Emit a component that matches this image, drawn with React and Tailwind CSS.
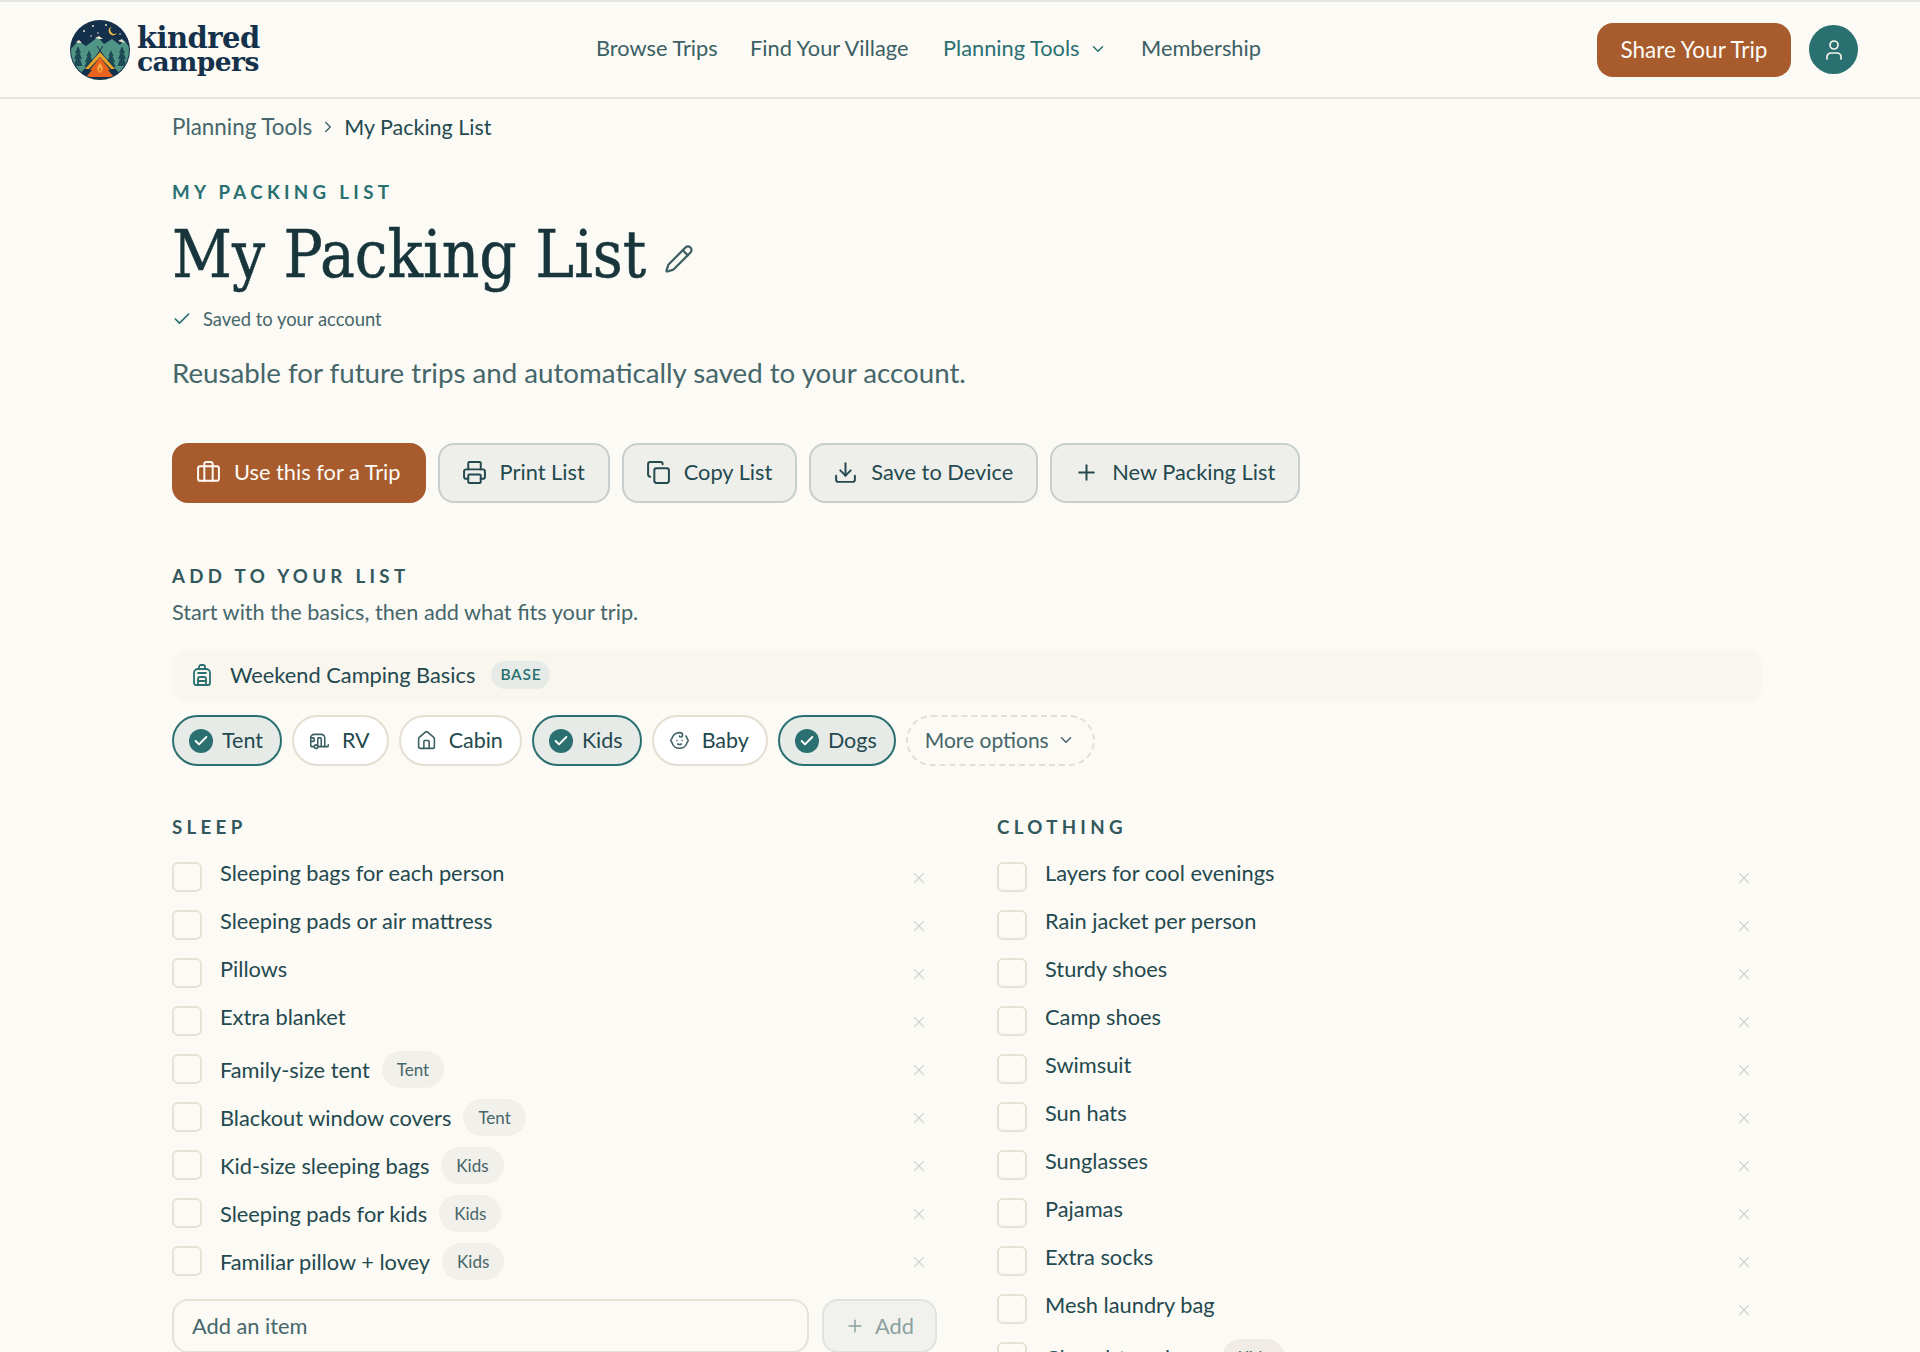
import { Backpack, Baby, Briefcase, Caravan, Check, ChevronDown, ChevronRight, Copy, Download, House, Pencil, Plus, Printer, User, X } from "lucide-react";

const sleep = [
  ["Sleeping bags for each person"],
  ["Sleeping pads or air mattress"],
  ["Pillows"],
  ["Extra blanket"],
  ["Family-size tent", "Tent"],
  ["Blackout window covers", "Tent"],
  ["Kid-size sleeping bags", "Kids"],
  ["Sleeping pads for kids", "Kids"],
  ["Familiar pillow + lovey", "Kids"],
];

const clothing = [
  ["Layers for cool evenings"],
  ["Rain jacket per person"],
  ["Sturdy shoes"],
  ["Camp shoes"],
  ["Swimsuit"],
  ["Sun hats"],
  ["Sunglasses"],
  ["Pajamas"],
  ["Extra socks"],
  ["Mesh laundry bag"],
  ["Closed-toe shoes", "Kids", true],
];

const Logo = () => (
  <svg viewBox="0 0 60 60" className="w-[60px] h-[60px] shrink-0">
    <defs>
      <clipPath id="logoClip">
        <circle cx="30" cy="30" r="29" />
      </clipPath>
    </defs>
    <circle cx="30" cy="30" r="30" fill="#14304a" />
    <g clipPath="url(#logoClip)">
      <path d="M0 30 L8 21 L16 26 L28 17 L34 24 L42 19 L50 25 L54 20 L60 28 V52 H0Z" fill="#4f9485" />
      <path d="M6 22 L9 20 L12 23 L9 23Z M25 18 L29 16 L33 19 L29 19Z M48 21 L52 19 L55 23 L51 22Z" fill="#e9dfc8" />
      <path d="M8 26 L11 33 H9.5 L12 39 H10 L12.500 46 H3.500 L6 39 H4 L6.500 33 H5Z" fill="#1c4a55" />
      <path d="M19 30 L21.500 36 H20.500 L23 42 H21.500 L23.500 47 H14.500 L16.500 42 H15 L17.500 36 H16.500Z" fill="#1c4a55" />
      <path d="M41 30 L43.500 36 H42.500 L45 42 H43.500 L45.500 47 H36.500 L38.500 42 H37 L39.500 36 H38.500Z" fill="#1c4a55" />
      <path d="M52 26 L55 33 H53.500 L56 39 H54 L56.500 46 H47.500 L50 39 H48 L50.500 33 H49Z" fill="#1c4a55" />
      <path d="M10 54 L30 31 L50 54Z" fill="#14304a" />
      <path d="M27 26 L33 35 M33 26 L27 35" stroke="#14304a" strokeWidth="1" />
      <path d="M15 49 L30 32 L45 49 L41 49 L30 37 L19 49Z" fill="#e3a32c" />
      <path d="M16 57 L22 50 L20 50 L27 41 L30 37 L33 41 L40 50 L38 50 L44 57 Z" fill="#e8641e" />
      <path d="M30 43 C33 47 34 50 30 53 C26 50 27 47 30 43Z" fill="#f3b04a" />
      <path d="M30 47 C31.500 49 31.500 50.500 30 52 C28.500 50.500 28.500 49 30 47Z" fill="#e8641e" />
    </g>
    <path d="M42 6.500 A4.500 4.500 0 1 0 47 13 A4 4 0 0 1 42 6.500Z" fill="#eebd45" />
    <g fill="#e9dfc8">
      <circle cx="23" cy="6" r="1" />
      <circle cx="36" cy="5" r="1" />
      <circle cx="14" cy="11" r="1" />
      <circle cx="28" cy="13" r="0.8" />
      <circle cx="50" cy="14" r="0.8" />
      <circle cx="21" cy="16" r="0.8" />
    </g>
  </svg>
);

const ActionButton = ({ icon: Icon, label, primary }) => (
  <button
    className={`h-[60px] flex items-center gap-[13px] pl-[22px] pr-[23px] pb-[2px] rounded-[16px] text-[21.800px] border-2 ${
      primary
        ? "bg-[#a85b2d] border-[#a85b2d] text-[#fbfaf5]"
        : "bg-[#eeefeb] border-[#c6cfcd] text-[#24494e]"
    }`}
  >
    <Icon className="w-[25px] h-[25px]" strokeWidth={1.9} />
    {label}
  </button>
);

const Chip = ({ icon: Icon, label, active }) => (
  <div
    className={`h-[51px] flex items-center gap-[9px] pl-[15px] pr-[17px] rounded-full border-2 text-[21.500px] text-[#24494e] ${
      active ? "bg-[#e6ebe8] border-[#2a7070]" : "bg-white border-[#e5ded2]"
    }`}
  >
    {active ? (
      <span className="w-[24px] h-[24px] rounded-full bg-[#2a7070] flex items-center justify-center">
        <Check className="w-[16px] h-[16px] text-white" strokeWidth={3} />
      </span>
    ) : (
      <Icon className="w-[21px] h-[21px] text-[#3c5f63] mr-[3px]" strokeWidth={1.8} />
    )}
    {label}
  </div>
);

const Row = ({ name, tag, tinted }) => (
  <div className="h-[48px] shrink-0 flex items-start">
    <div className="w-[30px] h-[30px] shrink-0 rounded-[6px] border-2 border-[#e8e2d6] bg-[#fbfaf5]"></div>
    <div className={`ml-[18px] flex-1 flex items-center gap-[12px] text-[21.800px] leading-[21px] text-[#24494e] ${tag ? "-mt-[3px]" : ""}`}>
      {name}
      {tag && (
        <span className={`h-[37px] px-[15px] flex items-center rounded-full text-[17px] text-[#46666a] ${tinted ? "bg-[#f1ebe6]" : "bg-[#f2f0ea]"}`}>
          {tag}
        </span>
      )}
    </div>
    <X className="w-[18px] h-[18px] mt-[7px] mr-[9px] text-[#cfd4d1]" strokeWidth={1.5} />
  </div>
);

const Heading = ({ children }) => (
  <h3 className="text-[18.700px] font-bold tracking-[0.23em] leading-[24px] text-[#33585c]">{children}</h3>
);

export default function App() {
  return (
    <div className="h-[1352px] overflow-hidden bg-[#fbfaf5] font-['Lato','Noto_Sans',sans-serif] text-[#24494e]">
      <header className="h-[99px] border-t-2 border-t-[#e6e6e3] border-b-2 border-b-[#e8e4dc] flex items-center pl-[70px] pr-[62px]">
        <div className="w-[526px] flex items-center gap-[7px]">
          <Logo />
          <div className="font-['DejaVu_Serif',serif] font-bold text-[#14304a] text-[26.500px] leading-[24px] tracking-[-0.02em]">
            <div className="text-[29px]">kindred</div>
            <div>campers</div>
          </div>
        </div>
        <nav className="flex-1 flex items-center text-[21.800px] text-[#3c5f63] -mt-[2px]">
          <a className="w-[154px]">Browse Trips</a>
          <a className="w-[193px]">Find Your Village</a>
          <a className="w-[198px] flex items-center gap-[9px] text-[#2a7070]">
            Planning Tools <ChevronDown className="w-[18px] h-[18px]" />
          </a>
          <a>Membership</a>
        </nav>
        <button className="h-[54px] w-[194px] rounded-[16px] bg-[#a85b2d] text-[#fbfaf5] text-[22.500px]">Share Your Trip</button>
        <div className="ml-[18px] w-[49px] h-[49px] rounded-full bg-[#2a7070] flex items-center justify-center">
          <User className="w-[24px] h-[24px] text-[#f5f3ea]" strokeWidth={1.7} />
        </div>
      </header>

      <main className="w-[1590px] ml-[172px]">
        <div className="mt-[13px] flex items-center gap-[7px] text-[22.400px] leading-[30px] text-[#46666a]">
          Planning Tools <ChevronRight className="w-[18px] h-[18px]" />
          <span className="text-[21.500px] text-[#24494e]">My Packing List</span>
        </div>

        <p className="mt-[38px] text-[18.700px] font-bold tracking-[0.23em] leading-[24px] text-[#2a7070]">MY PACKING LIST</p>

        <div className="mt-[11px] flex items-center gap-[18px]">
          <h1 className="font-['DejaVu_Serif_Condensed','Liberation_Serif',serif] text-[65px] leading-[80px] text-[#17353a] [-webkit-text-stroke:0.5px_#17353a]">My Packing List</h1>
          <Pencil className="w-[30px] h-[30px] mt-[8px] text-[#3c5f63]" strokeWidth={1.8} />
        </div>

        <div className="mt-[12px] flex items-center gap-[11px] text-[18.400px] leading-[24px] text-[#46666a]">
          <Check className="w-[20px] h-[20px] text-[#2a7070]" strokeWidth={2} />
          Saved to your account
        </div>

        <p className="mt-[24px] text-[27.700px] leading-[36px] text-[#46666a]">
          Reusable for future trips and automatically saved to your account.
        </p>

        <div className="mt-[52px] flex gap-[12px]">
          <ActionButton icon={Briefcase} label="Use this for a Trip" primary />
          <ActionButton icon={Printer} label="Print List" />
          <ActionButton icon={Copy} label="Copy List" />
          <ActionButton icon={Download} label="Save to Device" />
          <ActionButton icon={Plus} label="New Packing List" />
        </div>

        <div className="mt-[61px]">
          <Heading>ADD TO YOUR LIST</Heading>
        </div>
        <p className="mt-[11px] text-[21.700px] leading-[26px] text-[#46666a]">Start with the basics, then add what fits your trip.</p>

        <div className="mt-[24px] h-[54px] rounded-[16px] bg-[#f9f6f0] flex items-center pl-[18px] pb-[2px] text-[21.800px]">
          <Backpack className="w-[24px] h-[24px] text-[#2a7070]" strokeWidth={1.8} />
          <span className="ml-[16px]">Weekend Camping Basics</span>
          <span className="ml-[16px] h-[28px] px-[9px] rounded-full bg-[#e6ebe8] text-[#2a7070] text-[15.500px] font-semibold tracking-[0.05em] flex items-center">BASE</span>
        </div>

        <div className="mt-[12px] flex gap-[10px]">
          <Chip label="Tent" active />
          <Chip icon={Caravan} label="RV" />
          <Chip icon={House} label="Cabin" />
          <Chip label="Kids" active />
          <Chip icon={Baby} label="Baby" />
          <Chip label="Dogs" active />
          <div className="h-[51px] flex items-center gap-[8px] pl-[17px] pb-[2px] pr-[18px] rounded-full border-2 border-dashed border-[#e5ded2] text-[21px] text-[#46666a]">
            More options <ChevronDown className="w-[18px] h-[18px]" />
          </div>
        </div>

        <div className="mt-[49px] grid grid-cols-2 gap-[60px]">
          <section>
            <Heading>SLEEP</Heading>
            <div className="mt-[23px] flex flex-col">
              {sleep.map(([name, tag]) => (
                <Row key={name} name={name} tag={tag} />
              ))}
            </div>
            <div className="mt-[5px] flex gap-[13px]">
              <div className="flex-1 h-[54px] rounded-[16px] border-2 border-[#e8e2d6] flex items-center pl-[18px] text-[21.800px] text-[#46666a]">Add an item</div>
              <button className="w-[115px] h-[54px] rounded-[16px] border-2 border-[#dfe3df] bg-[#f1f2ee] flex items-center justify-center gap-[10px] text-[21.800px] text-[#8ba09f]">
                <Plus className="w-[20px] h-[20px]" strokeWidth={1.8} /> Add
              </button>
            </div>
          </section>
          <section>
            <Heading>CLOTHING</Heading>
            <div className="mt-[23px] flex flex-col">
              {clothing.map(([name, tag, tinted]) => (
                <Row key={name} name={name} tag={tag} tinted={tinted} />
              ))}
            </div>
          </section>
        </div>
      </main>
    </div>
  );
}
